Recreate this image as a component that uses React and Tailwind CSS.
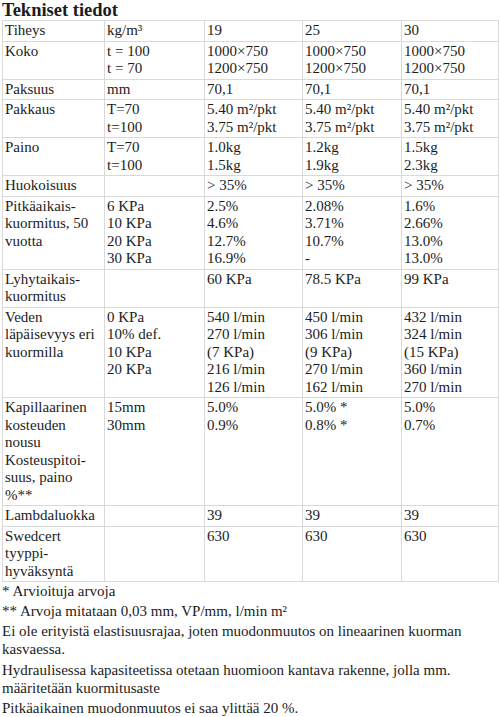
const rows = [
  { label: ['Tiheys'], unit: ['kg/m³'], v: [['19'], ['25'], ['30']] },
  {
    label: ['Koko'],
    unit: ['t = 100', 't = 70'],
    v: [
      ['1000×750', '1200×750'],
      ['1000×750', '1200×750'],
      ['1000×750', '1200×750'],
    ],
  },
  { label: ['Paksuus'], unit: ['mm'], v: [['70,1'], ['70,1'], ['70,1']] },
  {
    label: ['Pakkaus'],
    unit: ['T=70', 't=100'],
    v: [
      ['5.40 m²/pkt', '3.75 m²/pkt'],
      ['5.40 m²/pkt', '3.75 m²/pkt'],
      ['5.40 m²/pkt', '3.75 m²/pkt'],
    ],
  },
  {
    label: ['Paino'],
    unit: ['T=70', 't=100'],
    v: [
      ['1.0kg', '1.5kg'],
      ['1.2kg', '1.9kg'],
      ['1.5kg', '2.3kg'],
    ],
  },
  { label: ['Huokoisuus'], unit: [], v: [['> 35%'], ['> 35%'], ['> 35%']] },
  {
    label: ['Pitkäaikais-', 'kuormitus, 50', 'vuotta'],
    unit: ['6 KPa', '10 KPa', '20 KPa', '30 KPa'],
    v: [
      ['2.5%', '4.6%', '12.7%', '16.9%'],
      ['2.08%', '3.71%', '10.7%', '-'],
      ['1.6%', '2.66%', '13.0%', '13.0%'],
    ],
  },
  {
    label: ['Lyhytaikais-', 'kuormitus'],
    unit: [],
    v: [['60 KPa'], ['78.5 KPa'], ['99 KPa']],
  },
  {
    label: ['Veden', 'läpäisevyys eri', 'kuormilla'],
    unit: ['0 KPa', '10% def.', '10 KPa', '20 KPa'],
    v: [
      ['540 l/min', '270 l/min', '(7 KPa)', '216 l/min', '126 l/min'],
      ['450 l/min', '306 l/min', '(9 KPa)', '270 l/min', '162 l/min'],
      ['432 l/min', '324 l/min', '(15 KPa)', '360 l/min', '270 l/min'],
    ],
  },
  {
    label: ['Kapillaarinen', 'kosteuden', 'nousu', 'Kosteuspitoi-', 'suus, paino', '%**'],
    unit: ['15mm', '30mm'],
    v: [
      ['5.0%', '0.9%'],
      ['5.0% *', '0.8% *'],
      ['5.0%', '0.7%'],
    ],
  },
  { label: ['Lambdaluokka'], unit: [], v: [['39'], ['39'], ['39']] },
  {
    label: ['Swedcert', 'tyyppi-', 'hyväksyntä'],
    unit: [],
    v: [['630'], ['630'], ['630']],
  },
];

function Lines({ items }) {
  return items.map((t, i) => (
    <div key={i} className="whitespace-nowrap">
      {t}
    </div>
  ));
}

export default function App() {
  return (
    <div className="w-[500px] h-[717px] overflow-hidden bg-white text-[#1c1c1c] font-[Liberation_Serif,Times_New_Roman,serif] text-[15px] leading-[17.5px]">
      <h3 className="text-[18.5px] leading-[20px] font-bold pl-[2px]">Tekniset tiedot</h3>

      <table className="ml-[2px] w-[496px] table-fixed border-collapse">
        <colgroup>
          <col className="w-[102px]" />
          <col className="w-[100px]" />
          <col className="w-[98px]" />
          <col className="w-[99px]" />
          <col className="w-[97px]" />
        </colgroup>
        <tbody>
          {rows.map((r, i) => (
            <tr key={i}>
              <td className="border border-[#d9d9d9] px-[2px] py-[1px] align-top">
                <Lines items={r.label} />
              </td>
              <td className="border border-[#d9d9d9] px-[2px] py-[1px] align-top">
                <Lines items={r.unit} />
              </td>
              {r.v.map((c, j) => (
                <td key={j} className="border border-[#d9d9d9] px-[2px] py-[1px] align-top">
                  <Lines items={c} />
                </td>
              ))}
            </tr>
          ))}
        </tbody>
      </table>

      <div className="px-[2px]">
        <p className="mt-[1px]">* Arvioituja arvoja</p>
        <p className="mt-[2px]">** Arvoja mitataan 0,03 mm, VP/mm, l/min m²</p>
        <p className="mt-[3px]">
          Ei ole erityistä elastisuusrajaa, joten muodonmuutos on lineaarinen kuorman kasvaessa.
        </p>
        <p className="mt-[4px]">
          Hydraulisessa kapasiteetissa otetaan huomioon kantava rakenne, jolla mm. määritetään kuormitusaste
        </p>
        <p className="mt-[3px]">Pitkäaikainen muodonmuutos ei saa ylittää 20 %.</p>
      </div>
    </div>
  );
}
